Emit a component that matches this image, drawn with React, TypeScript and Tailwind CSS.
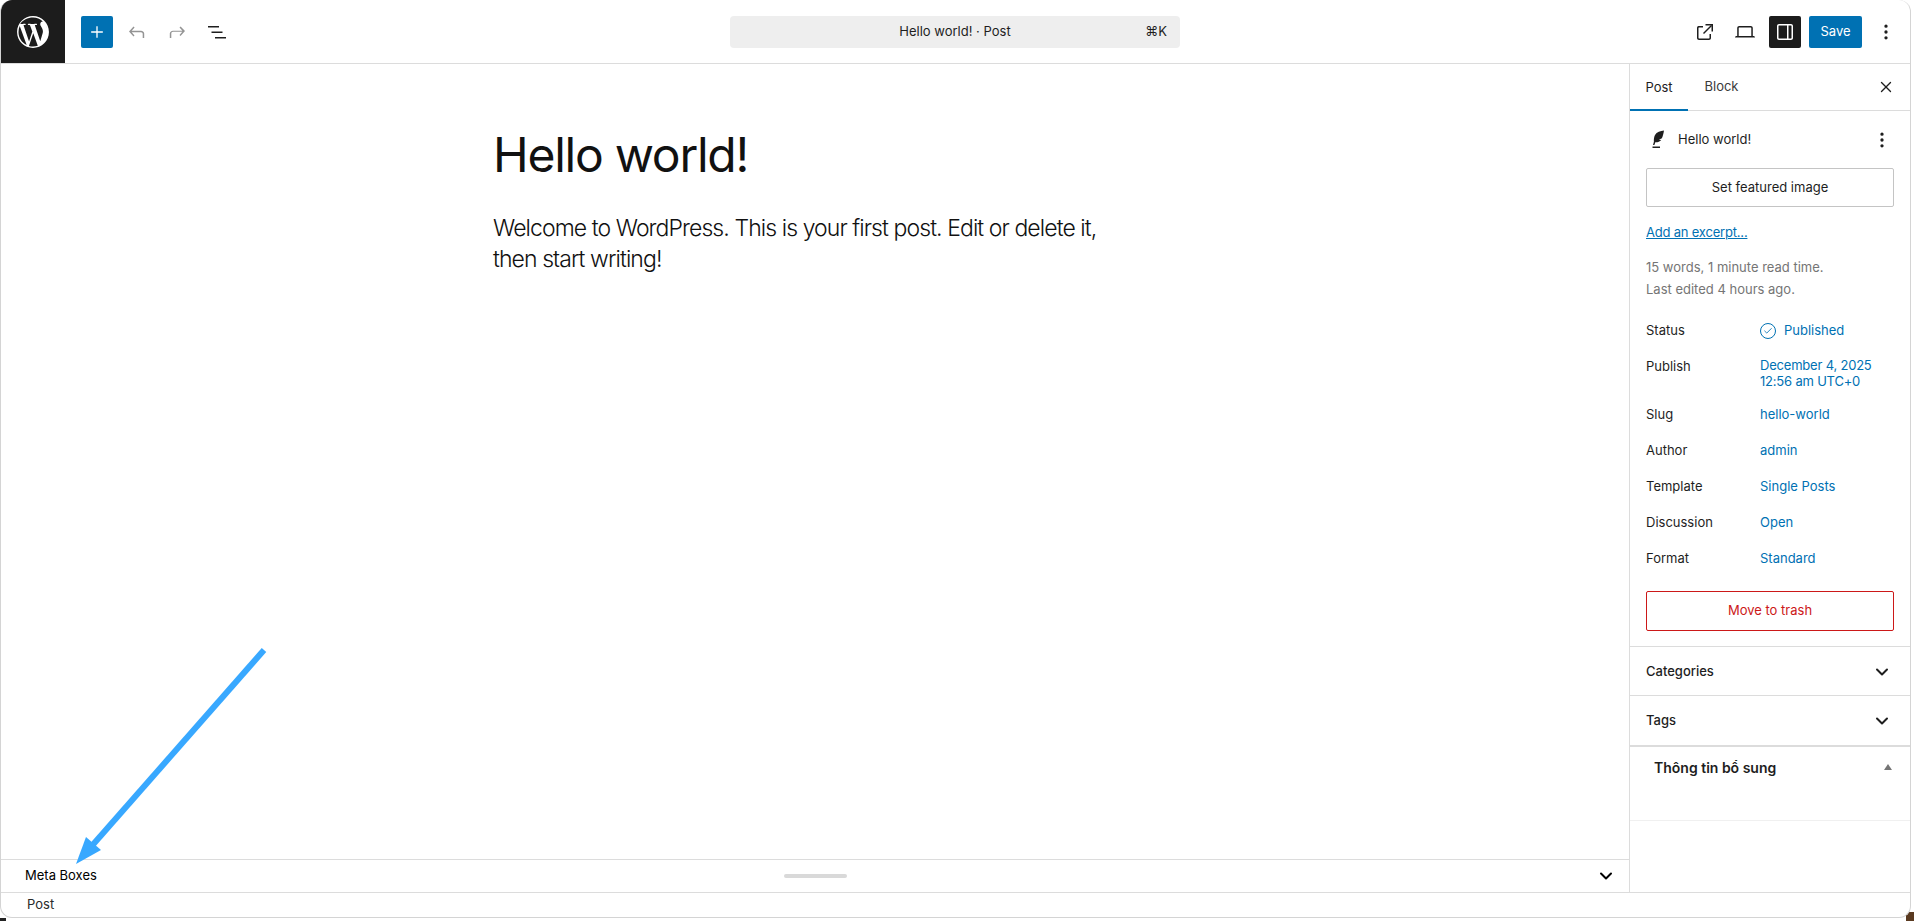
import { Check, ChevronDown, MoreVertical, X } from "lucide-react";

const rows = [
  { label: "Slug", value: "hello-world" },
  { label: "Author", value: "admin" },
  { label: "Template", value: "Single Posts" },
  { label: "Discussion", value: "Open" },
  { label: "Format", value: "Standard" },
];

function WpLogo() {
  return (
    <svg viewBox="0 0 80 80" className="w-[34px] h-[34px]" fill="#fff">
      <path d="M40 2.5C19.3 2.5 2.5 19.3 2.5 40S19.3 77.5 40 77.5 77.5 60.7 77.5 40 60.7 2.5 40 2.5Zm0 3.4c9 0 17.1 3.5 23.2 9.1-.1 0-.3 0-.4 0-3.4 0-5.8 3-5.8 6.2 0 2.9 1.7 5.3 3.4 8.1 1.3 2.3 2.9 5.3 2.9 9.6 0 3-1.2 6.4-2.7 11.3l-3.5 11.8-12.8-38c2.1-.1 4-.3 4-.3 1.9-.2 1.7-3-.2-2.9 0 0-5.7.4-9.4.4-3.5 0-9.3-.4-9.3-.4-1.9-.1-2.1 2.8-.2 2.9 0 0 1.8.2 3.7.3l5.5 15.1-7.7 23.1L17.7 24c2.1-.1 4-.3 4-.3 1.9-.2 1.7-3-.2-2.9 0 0-5.7.4-9.4.4-.7 0-1.4 0-2.2 0C16.1 11.900 27.300 5.900 40 5.900ZM5.900 40c0-4.900 1.100-9.600 2.900-13.900l16.300 44.700C13.800 65.300 5.900 53.600 5.900 40Zm34.100 34.100c-3.300 0-6.600-.5-9.600-1.400l10.200-29.700 10.500 28.700c.1.200.2.300.2.500-3.600 1.200-7.300 1.900-11.300 1.900Zm29.800-51c4.100 7.500 4.300 14.800 4.300 16.900 0 4.600-.9 9.800-3.500 16.300L60 69.800C68.400 64.900 74.100 55.100 74.100 40c0-6.100-1.600-11.900-4.300-16.900Z" />
    </svg>
  );
}

function Plus() {
  return (
    <svg viewBox="0 0 24 24" className="w-5 h-5" fill="#fff">
      <path d="M11.200 5h1.600v6.200H19v1.600h-6.200V19h-1.600v-6.200H5v-1.600h6.200z" />
    </svg>
  );
}

function Undo() {
  return (
    <svg viewBox="0 0 24 24" className="w-6 h-6" fill="#949494">
      <path d="M18.300 11.700c-.6-.6-1.400-.9-2.300-.9H6.700l2.900-3.300-1.100-1-4.500 5L8.500 16.500l1-1.100-2.800-3.100H16c.5 0 .9.200 1.200.5.300.3.500.7.500 1.200V18h1.500v-4.500c0-.7-.3-1.300-.9-1.800z" />
    </svg>
  );
}

function Redo() {
  return (
    <svg viewBox="0 0 24 24" className="w-6 h-6" fill="#949494">
      <path d="M15.600 6.500l-1.100 1 2.900 3.300H8c-.9 0-1.700.3-2.300.9-.6.5-.9 1.100-.9 1.800V18h1.500v-4.500c0-.5.200-.9.500-1.200.3-.3.700-.5 1.200-.5h9.300l-2.800 3.100 1 1.100 4.500-5z" />
    </svg>
  );
}

function ListView() {
  return (
    <svg viewBox="0 0 24 24" className="w-6 h-6" fill="#1e1e1e">
      <path d="M3 6h11v1.500H3V6Zm3.500 5.500h11V13h-11v-1.500ZM21 17h-11v1.500h11V17Z" />
    </svg>
  );
}

function External() {
  return (
    <svg viewBox="0 0 24 24" className="w-6 h-6" fill="#1e1e1e">
      <path d="M18.500 5.500h-6V4H20v7.500h-1.500v-6Z" />
      <path d="M19 6 11 14l-1-1 8-8 1 1Z" />
      <path d="M5.500 6H10v1.500H6c-.3 0-.5.200-.5.500v10c0 .3.200.5.500.5h10c.3 0 .5-.2.500-.5v-4H18V18c0 1.100-.9 2-2 2H6c-1.100 0-2-.9-2-2V8c0-1.100.7-2 1.500-2Z" />
    </svg>
  );
}

function Laptop() {
  return (
    <svg viewBox="0 0 24 24" className="w-6 h-6" fill="#1e1e1e">
      <path d="M20.500 16h-.7V8c0-1.100-.9-2-2-2H6.200c-1.100 0-2 .9-2 2v8h-.7c-.8 0-1.500.7-1.500 1.500h20c0-.8-.7-1.500-1.500-1.500ZM5.700 8c0-.3.200-.5.500-.5h11.600c.3 0 .5.200.5.500v8H5.700V8Z" />
    </svg>
  );
}

function SidebarIcon() {
  return (
    <svg viewBox="0 0 24 24" className="w-6 h-6" fill="#fff">
      <path d="M18 4H6c-1.100 0-2 .9-2 2v12c0 1.100.9 2 2 2h12c1.100 0 2-.9 2-2V6c0-1.100-.9-2-2-2Zm-12 14.500c-.3 0-.5-.2-.5-.5V6c0-.3.200-.5.500-.5h8v13H6Zm12.500-.5c0 .3-.2.500-.5.500h-2.500v-13H18c.3 0 .5.200.5.500v12Z" />
    </svg>
  );
}

function Feather() {
  return (
    <svg viewBox="0 0 24 24" className="w-6 h-6 shrink-0" fill="#1e1e1e">
      <path d="M18 2.500c-3.500.2-7.300 1.600-9 4.500-1 1.800-1.300 4.300-1.100 6.800l-.9 3.200h1.400l.9-2.700c2.500.1 4.500-.6 5.900-2.300l-2.300-.2 3-1.500c.9-1.800 1.600-4.800 2.100-7.800Z" />
      <path d="M6.500 18.500H14V20H6.500z" />
    </svg>
  );
}

export default function App() {
  return (
    <div className="relative w-[1914px] h-[921px] overflow-hidden bg-white font-['Inter',sans-serif] text-[13px] text-[#1e1e1e]">
      {/* desktop showing through the window corners */}
      <div className="absolute right-0 bottom-0 w-2 h-[9px] bg-[#5a3a20]" />
      <div className="absolute left-0 bottom-0 w-[6px] h-[3px] bg-[#222222]" />

      <div className="relative w-[1911px] h-[918px] flex flex-col bg-white border-r border-b border-l border-[#d4d4d4] rounded-[12px] overflow-hidden">
        <header className="h-[64px] shrink-0 flex items-center border-b border-[#dcdcdc]">
          <div className="w-[64px] h-[63px] bg-[#1c1c1c] flex items-center justify-center">
            <WpLogo />
          </div>
          <div className="flex items-center ml-4 w-[649px]">
            <div className="w-8 h-8 rounded-[2px] bg-[#0071b3] flex items-center justify-center">
              <Plus />
            </div>
            <div className="ml-2 w-8 flex justify-center">
              <Undo />
            </div>
            <div className="ml-2 w-8 flex justify-center">
              <Redo />
            </div>
            <div className="ml-2 w-8 flex justify-center">
              <ListView />
            </div>
          </div>
          <div className="w-[450px] h-8 rounded-[4px] bg-[#eeeeee] flex items-center relative justify-center">
            <span>Hello world! · Post</span>
            <span className="absolute right-[13px]">⌘K</span>
          </div>
          <div className="ml-auto flex items-center pr-2">
            <div className="w-8 flex justify-center">
              <External />
            </div>
            <div className="ml-2 w-8 flex justify-center">
              <Laptop />
            </div>
            <div className="ml-2 w-8 h-8 rounded-[2px] bg-[#1c1c1c] flex items-center justify-center">
              <SidebarIcon />
            </div>
            <div className="ml-2 h-8 w-[53px] rounded-[2px] bg-[#0071b3] text-white flex items-center justify-center">Save</div>
            <div className="ml-2 w-8 flex justify-center">
              <MoreVertical size={20} strokeWidth={2} />
            </div>
          </div>
        </header>

        <div className="flex flex-1 min-h-0">
          <div className="flex-1 min-w-0 flex flex-col">
            <main className="flex-1 min-h-0 pl-[492px] pt-[61px] text-[#111111]">
              <h1 className="text-[48px] leading-[60px] tracking-[-1.25px] font-normal">Hello world!</h1>
              <p className="mt-[28px] w-[640px] text-[23px] leading-[31px] tracking-[-0.92px] font-light">
                Welcome to WordPress. This is your first post. Edit or delete it, then start writing!
              </p>
            </main>
            <div className="h-[33px] shrink-0 border-t border-[#dcdcdc] flex items-center relative pl-6 pr-[13px] text-black">
              <span>Meta Boxes</span>
              <div className="absolute left-[783px] top-[14px] w-[63px] h-1 rounded-full bg-[#d9d9d9]" />
              <ChevronDown size={20} strokeWidth={2.4} className="ml-auto" />
            </div>
          </div>

          <aside className="w-[281px] shrink-0 border-l border-[#dcdcdc] flex flex-col">
            <div className="h-[47px] shrink-0 flex items-stretch border-b border-[#dcdcdc] relative">
              <div className="w-[58px] -mb-px flex items-center justify-center shadow-[inset_0_-2px_0_#0071b3]">Post</div>
              <div className="w-[67px] flex items-center justify-center text-[#3a3a3a]">Block</div>
              <X size={18} strokeWidth={1.8} className="absolute right-[15px] top-[14px]" />
            </div>
            <div className="px-4 pt-[17px] pb-[15px] border-b border-[#dcdcdc]">
              <div className="flex items-center h-6 gap-2">
                <Feather />
                <span>Hello world!</span>
                <MoreVertical size={20} className="ml-auto mr-[2px]" />
              </div>
              <div className="mt-4 h-[39px] rounded-[2px] border border-[#c4c4c4] flex items-center justify-center">Set featured image</div>
              <div className="mt-4 h-5 text-[#0071b3] underline tracking-[-0.2px]">Add an excerpt...</div>
              <div className="mt-[13px] text-[#757575] leading-[22px]">
                <div>15 words, 1 minute read time.</div>
                <div>Last edited 4 hours ago.</div>
              </div>
              <div className="mt-[21px] flex items-center h-5">
                <span className="w-[114px]">Status</span>
                <span className="flex items-center gap-2 text-[#0071b3]">
                  <span className="w-4 h-4 rounded-full border-[1.5px] border-[#0071b3] flex items-center justify-center">
                    <Check size={10} strokeWidth={2} />
                  </span>
                  Published
                </span>
              </div>
              <div className="mt-4 flex">
                <span className="w-[114px]">Publish</span>
                <span className="text-[#0071b3] leading-4 tracking-[-0.2px]">
                  December 4, 2025
                  <br />
                  12:56 am UTC+0
                </span>
              </div>
              {rows.map((r) => (
                <div key={r.label} className="mt-4 flex items-center h-5">
                  <span className="w-[114px]">{r.label}</span>
                  <span className="text-[#0071b3]">{r.value}</span>
                </div>
              ))}
              <div className="mt-[22px] h-10 rounded-[2px] border border-[#cc1818] text-[#cc1818] flex items-center justify-center">Move to trash</div>
            </div>
            <div className="h-[49px] shrink-0 px-4 pt-px flex items-center justify-between border-b border-[#dcdcdc]">
              <span className="font-medium">Categories</span>
              <ChevronDown size={20} strokeWidth={2.4} className="mr-[2px]" />
            </div>
            <div className="h-[51px] shrink-0 px-4 flex items-center justify-between border-b-2 border-[#dcdcdc]">
              <span className="font-medium">Tags</span>
              <ChevronDown size={20} strokeWidth={2.4} className="mr-[2px]" />
            </div>
            <div className="h-[74px] shrink-0 border-b border-[#f0f0f0] pl-6 pr-[18px] pt-[11px] flex items-start justify-between">
              <span className="text-[14px] font-semibold leading-5">Thông tin bổ sung</span>
              <div className="mt-[6px] w-0 h-0 border-x-[4px] border-x-transparent border-b-[6px] border-b-[#757575]" />
            </div>
          </aside>
        </div>

        <footer className="h-[25px] shrink-0 border-t border-[#dcdcdc] pl-[26px] flex items-center text-[#2a2a2a]">Post</footer>

        {/* annotation arrow */}
        <svg className="absolute left-[-1px] top-0 w-[300px] h-[900px] pointer-events-none" viewBox="0 0 300 900">
          <line x1="264" y1="650" x2="90" y2="848" stroke="#38a8ff" strokeWidth="6" />
          <polygon points="76,864 86,837 101,850" fill="#38a8ff" />
        </svg>
      </div>
    </div>
  );
}
